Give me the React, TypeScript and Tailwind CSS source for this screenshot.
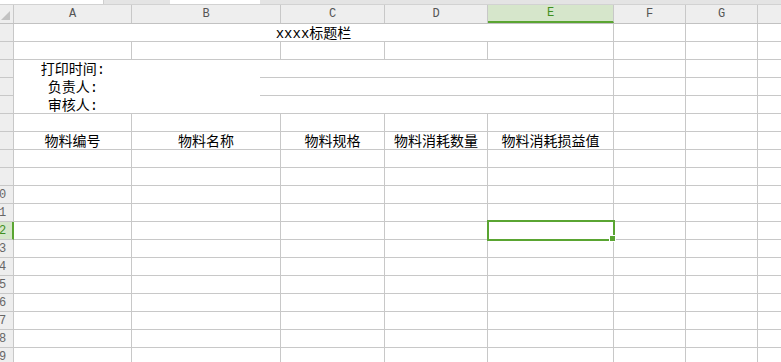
import React from "react";

const FONT = { fontFamily: '"Liberation Mono", "Noto Sans CJK SC", monospace' };
const GRID = "border-[#c8c8c8]";

const colW = ["w-[118px]", "w-[149px]", "w-[104px]", "w-[103px]", "w-[126px]", "w-[72px]", "w-[72px]"];
const letters = ["A", "B", "C", "D", "E", "F", "G", "H"];

function RowHead({ n, sel }: { n: number; sel?: boolean }) {
  return (
    <div
      className={
        "w-[14px] h-[18px] shrink-0 overflow-hidden border-b " +
        GRID +
        " " +
        (sel ? "bg-[#d6e6cb] border-r-2 border-r-[#5aa532] text-[#3f8f1f]" : "bg-[#eeeeee] border-r text-[#666666]")
      }
    >
      <div
        className={
          "w-[28px] text-center text-[12px] leading-[17px] pt-[1px] " + (n < 10 ? "-ml-[20px]" : "-ml-[15px]")
        }
      >
        {n}
      </div>
    </div>
  );
}

const TXT = " flex items-center justify-center pt-[3px] text-[14px] leading-[15px] text-black whitespace-nowrap";

function Cell({ i, children, last }: { i: number; children?: React.ReactNode; last?: boolean }) {
  return (
    <div className={(last ? "flex-1 " : colW[i] + " border-r ") + "shrink-0 h-[18px] border-b " + GRID + TXT}>
      {children}
    </div>
  );
}

function TailCells() {
  return (
    <>
      <Cell i={5} />
      <Cell i={6} />
      <Cell i={7} last />
    </>
  );
}

function NormalRow({ n, labels, selE }: { n: number; labels?: string[]; selE?: boolean }) {
  return (
    <div className="flex">
      <RowHead n={n} sel={selE} />
      {[0, 1, 2, 3, 4].map((i) =>
        i === 4 && selE ? (
          <div key={i} className={colW[4] + " shrink-0 h-[18px] border-r border-b relative " + GRID}>
            <div className="absolute -left-[1px] -top-[2px] w-[128px] h-[21px] border-2 border-[#5aa532]" />
            <div className="absolute left-[121px] top-[13px] w-[7px] h-[7px] bg-[#5aa532] border border-white" />
          </div>
        ) : (
          <Cell key={i} i={i}>
            {labels ? labels[i] : null}
          </Cell>
        )
      )}
      <TailCells />
    </div>
  );
}

function InfoRow({ n, text, fullBottom }: { n: number; text: string; fullBottom?: boolean }) {
  return (
    <div className="flex">
      <RowHead n={n} />
      <div className={"w-[600px] shrink-0 h-[18px] flex border-r " + GRID + (fullBottom ? " border-b" : "")}>
        <div className="w-[246px] shrink-0 h-full">
          <div className={"w-[118px] h-[17px]" + TXT}>{text}</div>
        </div>
        <div className={"flex-1 h-full " + (fullBottom ? "" : "border-b " + GRID)} />
      </div>
      <TailCells />
    </div>
  );
}

export default function App() {
  const rows: React.ReactNode[] = [];
  rows.push(
    <div className="flex" key={1}>
      <RowHead n={1} />
      <div className={"w-[600px] shrink-0 h-[18px] border-r border-b " + GRID + TXT}>xxxx标题栏</div>
      <TailCells />
    </div>
  );
  rows.push(<NormalRow key={2} n={2} />);
  rows.push(<InfoRow key={3} n={3} text="打印时间:" />);
  rows.push(<InfoRow key={4} n={4} text="负责人:" />);
  rows.push(<InfoRow key={5} n={5} text="审核人:" fullBottom />);
  rows.push(<NormalRow key={6} n={6} />);
  rows.push(
    <NormalRow key={7} n={7} labels={["物料编号", "物料名称", "物料规格", "物料消耗数量", "物料消耗损益值"]} />
  );
  for (let n = 8; n <= 20; n++) rows.push(<NormalRow key={n} n={n} selE={n === 12} />);

  return (
    <div className="w-[781px] h-[362px] overflow-hidden bg-white" style={FONT}>
      <div className="h-[5px] flex bg-[#e4e4e4] border-b border-[#d2d2d2]">
        <div className="w-[104px] bg-white border-r border-[#cfcfcf]" />
        <div className="w-[66px]" />
        <div className="w-[90px] bg-white" />
        <div className="flex-1" />
      </div>
      <div className="flex h-[19px] bg-[#eeeeee] border-b border-[#c2c2c2]">
        <div className={"w-[14px] shrink-0 border-r " + GRID + " flex items-end justify-end pr-[3px] pb-[3px]"}>
          <svg width="9" height="9" viewBox="0 0 9 9">
            <polygon points="9,0 9,9 0,9" fill="#c2c2c2" />
          </svg>
        </div>
        {letters.map((l, i) => {
          const sel = l === "E";
          return (
            <div
              key={l}
              className={
                (i === 7 ? "flex-1 " : colW[i] + " border-r ") +
                "shrink-0 " +
                GRID +
                " flex items-center justify-center text-[12px] leading-[17px] " +
                (sel ? "bg-[#d6e6cb] text-[#3f8f1f] border-b-2 border-b-[#5aa532]" : "text-[#555555]")
              }
            >
              {i === 7 ? "" : l}
            </div>
          );
        })}
      </div>
      {rows}
    </div>
  );
}
